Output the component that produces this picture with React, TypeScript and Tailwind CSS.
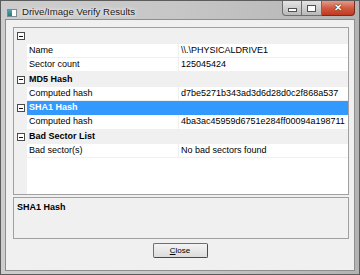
import React from 'react';

type Row =
  | { kind: 'cat'; label: string; selected?: boolean; h: number }
  | { kind: 'prop'; label: string; value: string; h: number };

const rows: Row[] = [
  { kind: 'cat', label: '', h: 16 },
  { kind: 'prop', label: 'Name', value: '\\\\.\\PHYSICALDRIVE1', h: 14 },
  { kind: 'prop', label: 'Sector count', value: '125045424', h: 14 },
  { kind: 'cat', label: 'MD5 Hash', h: 15 },
  { kind: 'prop', label: 'Computed hash', value: 'd7be5271b343ad3d6d28d0c2f868a537', h: 14 },
  { kind: 'cat', label: 'SHA1 Hash', selected: true, h: 14 },
  { kind: 'prop', label: 'Computed hash', value: '4ba3ac45959d6751e284ff00094a198711', h: 15 },
  { kind: 'cat', label: 'Bad Sector List', h: 14 },
  { kind: 'prop', label: 'Bad sector(s)', value: 'No bad sectors found', h: 14 },
];

const Collapse = () => (
  <div className="w-[8px] h-[8px] border border-[#4a4a4a] bg-white flex items-center justify-center">
    <div className="w-[4px] h-px bg-[#111]" />
  </div>
);

const App: React.FC = () => {
  return (
    <div className="w-[360px] h-[275px] flex flex-col overflow-hidden bg-gradient-to-r from-[#cdcdcd] via-[#c6c6c6] to-[#b3b3b3] border border-[#5c5c5c] font-['Liberation_Sans',Arial,sans-serif] text-[9px] text-black">
      {/* title bar */}
      <div className="h-[18px] flex items-start shrink-0">
        <div className="mt-[8px] ml-[6px] w-[10px] h-[8px] border border-[#7a8a96] bg-white flex">
          <div className="w-[4px] h-full bg-gradient-to-b from-[#4aa3c8] to-[#2e7d5a]" />
        </div>
        <div className="ml-[5px] mt-[6px] text-[9.6px] leading-none text-[#1a1a1a] [text-shadow:0_0_6px_#fff,0_0_3px_#fff]">
          Drive/Image Verify Results
        </div>
        <div className="ml-auto mr-[4px] flex h-[15px]">
          <div className="w-[20px] h-full border border-[#6d6d6d] border-t-0 rounded-bl-[4px] bg-gradient-to-b from-[#e4e4e4] to-[#b9b9b9] flex items-center justify-center">
            <div className="mt-[4px] w-[7px] h-[2px] bg-white border border-[#505050] box-content" />
          </div>
          <div className="w-[20px] h-full border border-[#6d6d6d] border-t-0 border-l-0 bg-gradient-to-b from-[#e4e4e4] to-[#b9b9b9] flex items-center justify-center">
            <div className="w-[7px] h-[5px] border-[2px] border-t-[3px] border-white outline outline-1 outline-[#505050]" />
          </div>
          <div className="w-[33px] h-full border border-[#7a2a1e] border-t-0 border-l-0 rounded-br-[4px] bg-gradient-to-b from-[#e69a88] via-[#d05a42] to-[#c0391f] flex items-center justify-center">
            <span className="text-white font-bold text-[10px] leading-none [text-shadow:0_0_1px_#3a0a00,0_0_1px_#3a0a00]">✕</span>
          </div>
        </div>
      </div>

      {/* client */}
      <div className="flex-1 px-[4px] pb-[3px] flex">
        <div className="flex-1 bg-[#f0f0f0] border border-[#8e8e8e] flex flex-col">
          {/* property grid */}
          <div className="mt-[7px] ml-[7px] mr-[5px] h-[168px] border border-[#a0a0a0] flex flex-col">
            {rows.map((r, i) => (
              <div key={i} className="flex" style={{ height: r.h }}>
                <div className="w-[13px] bg-[#f0f0f0] flex items-center justify-center">
                  {r.kind === 'cat' && <Collapse />}
                </div>
                {r.kind === 'cat' ? (
                  <div
                    className={`flex-1 flex items-center pl-[2px] font-bold ${
                      r.selected ? 'bg-[#3399ff] text-white' : 'bg-[#f0f0f0]'
                    }`}
                  >
                    {r.label}
                  </div>
                ) : (
                  <div className="flex-1 flex bg-white border-b border-[#f0f0f0]">
                    <div className="w-[152px] flex items-center pl-[2px] border-r border-[#f0f0f0]">
                      {r.label}
                    </div>
                    <div className="flex-1 flex items-center pl-[2px]">{r.value}</div>
                  </div>
                )}
              </div>
            ))}
            <div className="flex-1 flex">
              <div className="w-[13px] bg-[#f0f0f0]" />
              <div className="flex-1 bg-white" />
            </div>
          </div>

          {/* description */}
          <div className="mt-[2px] ml-[7px] mr-[5px] h-[42px] border border-[#a0a0a0] bg-[#f0f0f0] px-[3px] pt-[3px] font-bold">
            SHA1 Hash
          </div>

          {/* button */}
          <div className="mt-[4px] flex justify-center">
            <button className="w-[55px] h-[15px] border border-[#707070] border-r-[#4a4a4a] border-b-[#4a4a4a] rounded-[2px] bg-gradient-to-b from-[#f4f4f4] to-[#dcdcdc] text-[8px] leading-none flex items-center justify-center">
              <span className="underline">C</span>lose
            </button>
          </div>
        </div>
      </div>
    </div>
  );
};

export default App;
